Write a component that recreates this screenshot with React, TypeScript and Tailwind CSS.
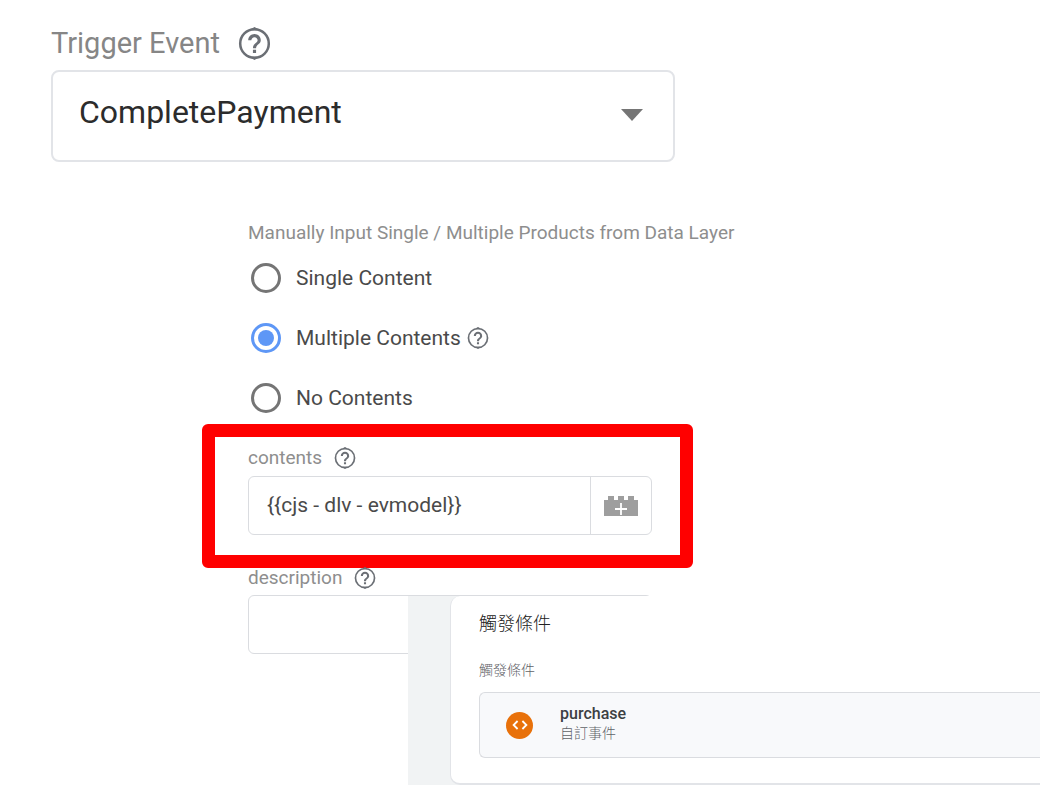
import { useState } from "react";

const contentModes = [
  { value: "single", label: "Single Content", help: false },
  { value: "multiple", label: "Multiple Contents", help: true },
  { value: "none", label: "No Contents", help: false },
];

function HelpIcon({ className }: { className: string }) {
  return (
    <svg viewBox="1.5 1.5 21 21" className={className} fill="#6b6f75" aria-hidden="true">
      <circle cx="12" cy="12" r="9.1" fill="none" stroke="#6b6f75" strokeWidth="1.6" />
      <path d="M10.3 2.4 12 1.5l1.7.9v1.2h-3.4zM10.3 21.6l1.7.9 1.7-.9v-1.2h-3.4z" />
      <path d="M11 16h2v2h-2zM12 6c-2.21 0-4 1.79-4 4h2c0-1.1.9-2 2-2s2 .9 2 2c0 2-3 1.75-3 5h2c0-2.25 3-2.5 3-5 0-2.21-1.79-4-4-4z" />
    </svg>
  );
}

function BrickIcon() {
  return (
    <svg viewBox="0 0 34 20" className="h-5 w-[34px]" aria-hidden="true">
      <path d="M0 4h4V0h6v4h4V0h6v4h4V0h6v4h4v16H0z" fill="#9e9e9e" />
      <path d="M17 7v12M11 13h12" stroke="#fff" strokeWidth="1.8" />
    </svg>
  );
}

function TriggerEvent() {
  return (
    <section className="pl-[51px] pr-4">
      <div className="flex h-[34px] items-center gap-[18px]">
        <label htmlFor="trigger-event" className="text-[29px] leading-8 text-[#868686]">
          Trigger Event
        </label>
        <HelpIcon className="size-[33px]" />
      </div>
      <div className="relative mt-[10px] max-w-[624px]">
        <select
          id="trigger-event"
          className="h-[92px] w-full appearance-none rounded-lg border-2 border-[#e2e4e8] bg-white pb-2 pl-[26px] text-[32px] text-[#2c2c2c]"
        >
          <option>CompletePayment</option>
        </select>
        <svg
          viewBox="0 0 22 12"
          className="pointer-events-none absolute right-8 top-[39px] h-3 w-[22px]"
          aria-hidden="true"
        >
          <path d="M0 0h22L11 12z" fill="#757575" />
        </svg>
      </div>
    </section>
  );
}

function ContentModes() {
  const [mode, setMode] = useState("multiple");

  return (
    <fieldset>
      <legend className="text-[19px] leading-6 text-[#8e8e8e]">
        Manually Input Single / Multiple Products from Data Layer
      </legend>
      <div className="flex flex-col gap-2 pl-[3px] pt-[7px]">
        {contentModes.map((item) => (
          <label key={item.value} className="flex h-[52px] items-center text-[21px] leading-7 text-[#4a4a4a]">
            <input
              type="radio"
              name="content-mode"
              checked={mode === item.value}
              onChange={() => setMode(item.value)}
              className="mr-[15px] size-[30px] appearance-none rounded-full border-[3px] border-[#757575] bg-clip-content p-1 checked:border-[#5e97f6] checked:bg-[#5e97f6]"
            />
            {item.label}
            {item.help && <HelpIcon className="ml-[6px] size-[22px]" />}
          </label>
        ))}
      </div>
    </fieldset>
  );
}

function ContentsField() {
  return (
    <div className="-ml-[46px] max-w-[491px] rounded-md border-[13px] border-[#ff0000] pb-5 pl-[33px] pr-7 pt-[9px]">
      <div className="flex h-6 items-center gap-3">
        <label htmlFor="contents" className="text-[19px] leading-6 text-[#8e8e8e]">
          contents
        </label>
        <HelpIcon className="size-[22px]" />
      </div>
      <div className="mt-[6px] flex h-[59px] rounded-md border border-[#dadce0]">
        <input
          id="contents"
          defaultValue="{{cjs - dlv - evmodel}}"
          className="min-w-0 flex-1 rounded-l-md pl-[18px] text-[21px] text-[#4a4a4a] outline-none"
        />
        <button
          type="button"
          aria-label="Insert variable"
          className="flex w-[61px] items-center justify-center border-l border-[#dadce0]"
        >
          <BrickIcon />
        </button>
      </div>
    </div>
  );
}

function DescriptionField() {
  return (
    <div className="max-w-[404px]">
      <div className="flex h-5 items-center gap-3">
        <label htmlFor="description" className="text-[19px] leading-5 text-[#8e8e8e]">
          description
        </label>
        <HelpIcon className="size-[22px]" />
      </div>
      <input
        id="description"
        className="mt-[7px] block h-[59px] w-full rounded-md border border-[#dadce0] px-4 text-[21px] outline-none"
      />
    </div>
  );
}

// Sits over the lower part of the description box and runs off the right edge.
function TriggerPanel() {
  return (
    <section className="relative -mt-[58px] ml-[408px] bg-[#f1f3f4] pl-[42px] font-['Roboto','Noto_Sans_CJK_TC',sans-serif]">
      <div className="rounded-l-[10px] border-b-2 border-l border-[#e2e4e8] bg-white pb-[25px] pl-7 pt-[14px]">
        <h2 className="text-[18px] font-light leading-7 text-[#212121]">觸發條件</h2>
        <h3 className="mt-[22px] text-[14px] font-light leading-5 text-[#5f6368]">觸發條件</h3>
        <div className="mt-3 flex h-[66px] items-center rounded-l-md border-y border-l border-[#dadce0] bg-[#f8f9fb] pl-[26px]">
          <span className="flex size-[27px] items-center justify-center rounded-full bg-[#e8710a]">
            <svg viewBox="0 0 16 10" className="h-[10px] w-4" fill="none" stroke="#fff" strokeWidth="1.8" aria-hidden="true">
              <path d="M5.6 1 1.6 5l4 4M10.4 1l4 4-4 4" />
            </svg>
          </span>
          <div className="ml-[27px] pb-1">
            <div className="text-[16px] font-medium leading-5 text-[#3c4043]">purchase</div>
            <div className="text-[14px] font-light leading-[18px] text-[#5f6368]">自訂事件</div>
          </div>
        </div>
      </div>
    </section>
  );
}

export default function App() {
  return (
    <main className="overflow-x-hidden bg-white pb-4 pt-[26px] font-['Roboto',sans-serif]">
      <TriggerEvent />
      <div className="mt-[59px] pl-[248px] pr-4">
        <ContentModes />
        <ContentsField />
        <DescriptionField />
      </div>
      <TriggerPanel />
    </main>
  );
}
